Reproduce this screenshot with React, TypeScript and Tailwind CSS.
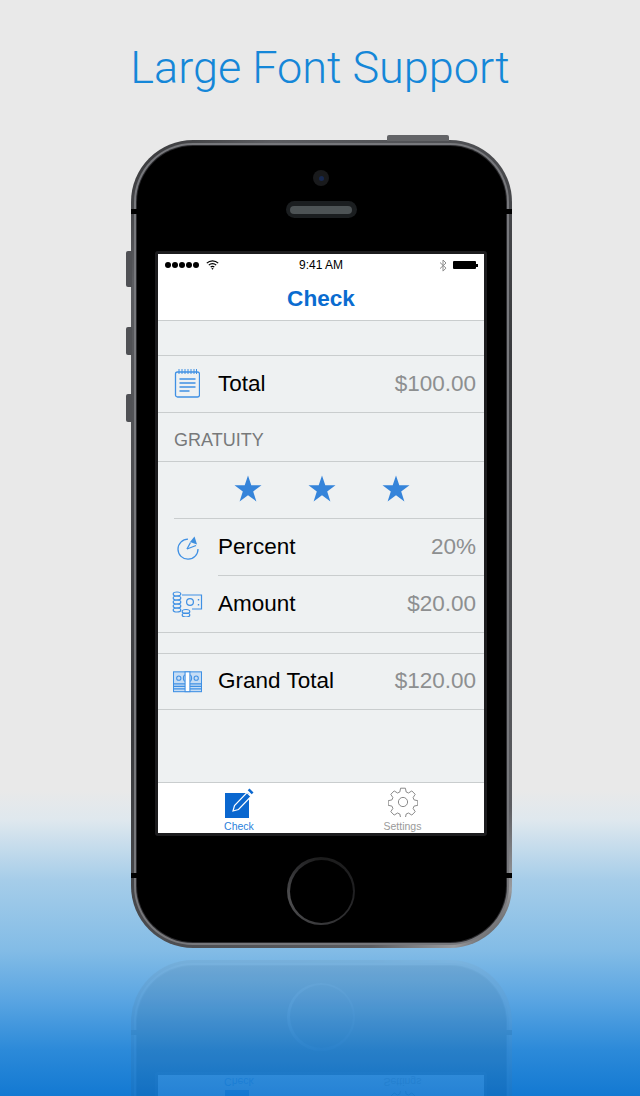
import React from 'react';

const sans = { fontFamily: '"Liberation Sans", Arial, sans-serif' };

const NotepadIcon = () => (
  <svg width="26" height="30" viewBox="-0.5 1 26 30" fill="none" stroke="#3f90e4" strokeWidth="1.3">
    <rect x="1" y="4" width="24" height="25" rx="2" />
    <path d="M4.5 1v5M7.5 1v5M10.5 1v5M13.5 1v5M16.5 1v5M19.5 1v5M22 1v5" strokeWidth="1" />
    <path d="M5 11h16M5 15h16M5 19h16M5 23h10" strokeWidth="1.3" />
  </svg>
);

const PieIcon = () => (
  <svg width="26" height="26" viewBox="-1 0 26 26" fill="none" stroke="#3f90e4" strokeWidth="1.3">
    <path d="M13 4.2A10 10 0 1 0 23 14" />
    <path d="M12 14l3.5-6.5" />
    <path d="M12 14l9-3.5" />
    <path d="M15 7l4.5-5.5 2.5 8z" fill="#3f8fde" stroke="none" />
  </svg>
);

const CoinsIcon = () => (
  <svg width="31" height="26" viewBox="0 0 31 26" fill="none" stroke="#3f90e4" strokeWidth="1.2">
    <ellipse cx="5" cy="3" rx="3.8" ry="2" />
    <ellipse cx="5" cy="7" rx="3.8" ry="2" />
    <ellipse cx="5" cy="11" rx="3.8" ry="2" />
    <ellipse cx="5" cy="15" rx="3.8" ry="2" />
    <ellipse cx="5" cy="19" rx="3.8" ry="2" />
    <ellipse cx="14" cy="20.5" rx="3.8" ry="2" />
    <ellipse cx="14" cy="24" rx="3.8" ry="2" />
    <path d="M10 4h19.5v14H20" />
    <circle cx="18" cy="11" r="3.4" />
    <path d="M26.5 8v1.5M26.5 13v1.5" strokeWidth="1.4" />
  </svg>
);

const BillsIcon = () => (
  <svg width="29" height="22" viewBox="0 0 30 22" fill="none" stroke="#3f90e4" strokeWidth="1.1">
    <rect x="0.5" y="0.5" width="29" height="20.5" fill="#c6ddf5" />
    <circle cx="6" cy="7" r="2.2" />
    <circle cx="24" cy="7" r="2.2" />
    <path d="M12 3.5c-1.5 2-1.5 5 0 7M18 3.5c1.5 2 1.5 5 0 7" />
    <path d="M0.5 13h29M0.5 15.5h29M0.5 18h29" strokeWidth="1.3" />
    <rect x="12.5" y="0.5" width="5" height="20.5" fill="#fff" stroke="#3f90e4" />
  </svg>
);

const Star = () => (
  <svg width="28" height="27" viewBox="0 0 28 27">
    <path d="M14 0.5l3.3 9.8h10.2l-8.3 6.1 3.2 10-8.4-6.2-8.4 6.2 3.2-10-8.3-6.1h10.2z" fill="#3584da" />
  </svg>
);

const EditIcon = () => (
  <svg width="32" height="31" viewBox="0 0 32 31">
    <rect x="1" y="6" width="24" height="25" fill="#0a67cf" />
    <path d="M9 24l1.5-5.5L23 5.5l4 4L14.5 22.5z" fill="#0a67cf" stroke="#fff" strokeWidth="1.2" />
    <path d="M25.5 1.5l4 4-1.8 1.8-4-4z" fill="#0a67cf" />
  </svg>
);

const GearIcon = () => (
  <svg width="30" height="30" viewBox="0 0 30 30" fill="none" stroke="#8a8a8a" strokeWidth="1">
    <path d="M12.6 1.2h4.8l.8 3.8 2.3 1 3.3-2.1 3.4 3.4-2.1 3.3 1 2.3 3.7.8v4.6l-3.7.8-1 2.3 2.1 3.3-3.4 3.4-3.3-2.1-2.3 1-.8 3.7h-4.8l-.8-3.7-2.3-1-3.3 2.1-3.4-3.4 2.1-3.3-1-2.3-3.7-.8v-4.6l3.7-.8 1-2.3-2.1-3.3 3.4-3.4 3.3 2.1 2.3-1z" strokeLinejoin="round" />
    <circle cx="15" cy="15" r="4.6" />
  </svg>
);

const WifiIcon = () => (
  <svg width="13" height="10" viewBox="0 0 13 10" fill="none" stroke="#000" strokeWidth="1.2">
    <path d="M0.8 3.2a8 8 0 0 1 11.4 0M2.8 5.2a5.2 5.2 0 0 1 7.4 0M4.7 7.1a2.5 2.5 0 0 1 3.6 0" />
    <path d="M6.5 9.8l-1.1-1.2a1.5 1.5 0 0 1 2.2 0z" fill="#000" stroke="none" />
  </svg>
);

const BluetoothIcon = () => (
  <svg width="8" height="13" viewBox="0 0 8 13" fill="none" stroke="#8c8c8c" strokeWidth="1">
    <path d="M1 3.5l6 5.6-3 3V1l3 3-6 5.6" />
  </svg>
);

function StatusBar() {
  return (
    <div className="relative flex h-[22px] items-center justify-between pl-[7px] pr-[6px]">
      <div className="flex items-center gap-[7px]">
        <div className="flex gap-[1px]">
          {[0, 1, 2, 3, 4].map((i) => (
            <div key={i} className="h-[6px] w-[6px] rounded-full bg-black" />
          ))}
        </div>
        <WifiIcon />
      </div>
      <span className="absolute left-[141px] text-[12px] leading-none text-black">9:41 AM</span>
      <div className="flex items-center gap-[6px]">
        <BluetoothIcon />
        <div className="flex items-center">
          <div className="h-[8px] w-[23px] rounded-[1px] bg-black" />
          <div className="h-[3px] w-[2px] bg-black" />
        </div>
      </div>
    </div>
  );
}

function Row({ icon, label, value, inset, height }: { icon: React.ReactNode; label: string; value: string; inset?: boolean; height: string }) {
  return (
    <div className={`flex items-stretch ${height}`}>
      <div className="flex w-[60px] shrink-0 items-center justify-center pr-[2px]">{icon}</div>
      <div className={`flex flex-1 items-center justify-between pr-[8px] ${inset ? 'border-b border-[#c9cdce]' : ''}`}>
        <span className="text-[22.5px] leading-none text-black">{label}</span>
        <span className="text-[22.5px] leading-none text-[#8d8f90]">{value}</span>
      </div>
    </div>
  );
}

function TabBar() {
  return (
    <div className="flex h-[50px] bg-white">
      <div className="flex w-[163px] flex-col items-center pl-[1px] pt-[4px]">
        <EditIcon />
        <span className="mt-[3px] pr-[2px] text-[10.5px] leading-none text-[#2a7fdb]">Check</span>
      </div>
      <div className="flex flex-1 flex-col items-center pt-[4px]">
        <GearIcon />
        <span className="mt-[4px] text-[10.5px] leading-none text-[#9a9a9a]">Settings</span>
      </div>
    </div>
  );
}

function Screen() {
  return (
    <div className="flex h-[579px] w-[326px] flex-col bg-[#eef1f2]" style={sans}>
      <div className="h-[67px] border-b border-[#c9cdce] bg-white">
        <StatusBar />
        <div className="pt-[1px] text-center text-[22.6px] font-bold leading-[44px] text-[#0a6cd0]">Check</div>
      </div>
      <div className="h-[35px] border-b border-[#c9cdce]" />
      <div className="border-b border-[#c9cdce]">
        <Row icon={<NotepadIcon />} label="Total" value="$100.00" height="h-[56px]" />
      </div>
      <div className="flex h-[49px] items-center border-b border-[#c9cdce] pl-[16px] pt-[6px] text-[18px] leading-none text-[#77797a]">
        GRATUITY
      </div>
      <div className="ml-[16px] flex h-[57px] items-center gap-[46px] border-b border-[#c9cdce] pb-[3px] pl-[60px]">
        <Star />
        <Star />
        <Star />
      </div>
      <Row icon={<PieIcon />} label="Percent" value="20%" inset height="h-[57px]" />
      <div className="border-b border-[#c9cdce]">
        <Row icon={<CoinsIcon />} label="Amount" value="$20.00" height="h-[56px]" />
      </div>
      <div className="h-[21px] border-b border-[#c9cdce]" />
      <div className="border-b border-[#c9cdce]">
        <Row icon={<BillsIcon />} label="Grand Total" value="$120.00" height="h-[55px]" />
      </div>
      <div className="flex-1 border-b border-[#c9cdce]" />
      <TabBar />
    </div>
  );
}

// the mirrored copy only shows the tab bar, the rest falls off the page
function ReflectedScreen() {
  return (
    <div className="flex h-[579px] w-[326px] flex-col justify-end bg-[#eef1f2]" style={sans}>
      <TabBar />
    </div>
  );
}

function Phone({ children }: { children: React.ReactNode }) {
  return (
    <div className="relative ml-[2px] h-[808px] w-[381px] shrink-0">
      {/* side and top buttons */}
      <div className="absolute left-[-5px] top-[111px] h-[36px] w-[6px] rounded-l-[2px] bg-[#505155]" />
      <div className="absolute left-[-5px] top-[187px] h-[28px] w-[6px] rounded-l-[2px] bg-[#505155]" />
      <div className="absolute left-[-5px] top-[254px] h-[28px] w-[6px] rounded-l-[2px] bg-[#505155]" />
      <div className="absolute right-[63px] top-[-5px] h-[6px] w-[62px] rounded-t-[2px] bg-[#636467]" />

      <div className="h-full w-full rounded-[62px] bg-[linear-gradient(135deg,#333335_0%,#5c5d61_12%,#3a3b3e_50%,#5c5d61_88%,#9a9b9e_95%,#2a2a2c_100%)] p-[3px]">
        <div className="h-full w-full rounded-[59px] bg-[#77787c] p-[2px]">
          <div className="h-full w-full rounded-[57px] bg-[#2a2a2d] p-[1px]">
            <div className="flex h-full w-full flex-col items-center rounded-[56px] bg-black pt-[24px]">
              {/* camera */}
              <div className="flex h-[16px] w-[16px] items-center justify-center rounded-full bg-[#191a1c]">
                <div className="h-[5px] w-[5px] rounded-full bg-[#17284f]" />
              </div>
              {/* earpiece */}
              <div className="mt-[15px] flex h-[17px] w-[71px] items-center justify-center rounded-full bg-[#1b1e20]">
                <div className="h-[8px] w-[62px] rounded-full bg-[#4d5355]" />
              </div>
              {/* screen */}
              <div className="mt-[33px] rounded-[3px] bg-[#1c1c1e] p-[3px]">{children}</div>
              {/* home button */}
              <div className="mt-[21px] flex h-[68px] w-[68px] items-center justify-center rounded-full bg-[conic-gradient(#1c1c1c_0deg,#202022_90deg,#3a3a3c_180deg,#4e4e50_260deg,#2a2a2c_320deg,#1c1c1c_360deg)]">
                <div className="h-[63px] w-[63px] rounded-full bg-black" />
              </div>
            </div>
          </div>
        </div>
      </div>

      {/* antenna bands */}
      <div className="absolute left-0 top-[69px] h-[5px] w-[6px] bg-black" />
      <div className="absolute right-0 top-[69px] h-[5px] w-[6px] bg-black" />
      <div className="absolute bottom-[70px] left-0 h-[5px] w-[6px] bg-black" />
      <div className="absolute bottom-[70px] right-0 h-[5px] w-[6px] bg-black" />
    </div>
  );
}

export default function App() {
  return (
    <div className="flex h-[1096px] w-[640px] flex-col items-center overflow-hidden bg-[linear-gradient(to_bottom,#e9e9e9_0px,#e9e9e9_790px,#dfe8ee_820px,#a6cde9_880px,#83bce6_950px,#5aa5e2_1000px,#2c8ad9_1050px,#1379d2_1096px)]">
      <h1
        className="mt-[37px] h-[103px] shrink-0 text-[45px] font-light leading-[62px] text-[#1587d8]"
        style={{ fontFamily: 'Roboto, sans-serif' }}
      >
        Large Font Support
      </h1>
      <Phone>
        <Screen />
      </Phone>
      {/* mirrored reflection under the phone */}
      <div aria-hidden className="mt-[12px] shrink-0 scale-y-[-1] opacity-[0.07]">
        <Phone>
          <ReflectedScreen />
        </Phone>
      </div>
    </div>
  );
}
